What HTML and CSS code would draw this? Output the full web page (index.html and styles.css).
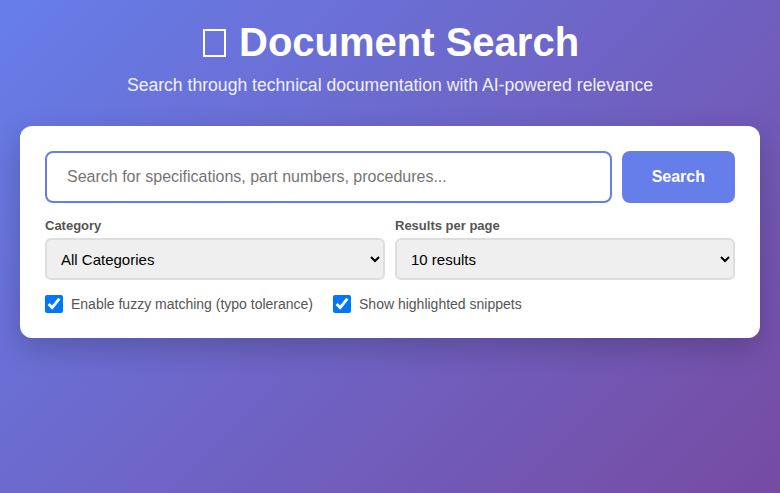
FILE: index.html
```html
<!DOCTYPE html>
<html lang="en">
<head>
<meta charset="utf-8">
<title>Document Search</title>
<link rel="stylesheet" href="styles.css">
</head>
<body>
<div class="page">
  <header class="header">
    <h1><svg class="title-icon" width="27" height="28" viewBox="0 0 27 28" aria-hidden="true"><rect x="3" y="1" width="21" height="26" fill="none" stroke="#fff" stroke-width="2"/></svg> Document Search</h1>
    <p>Search through technical documentation with AI-powered relevance</p>
  </header>
  <main class="card">
    <div class="search-row">
      <input class="search-input" type="text" placeholder="Search for specifications, part numbers, procedures...">
      <button class="search-btn">Search</button>
    </div>
    <div class="filters">
      <div class="field">
        <label class="field-label">Category</label>
        <select class="field-select">
          <option>All Categories</option>
        </select>
      </div>
      <div class="field">
        <label class="field-label">Results per page</label>
        <select class="field-select">
          <option>10 results</option>
        </select>
      </div>
    </div>
    <div class="options">
      <label class="option"><input type="checkbox" checked> Enable fuzzy matching (typo tolerance)</label>
      <label class="option"><input type="checkbox" checked> Show highlighted snippets</label>
    </div>
  </main>
</div>
</body>
</html>
```

FILE: styles.css
```css
* { box-sizing: border-box; }
html, body { margin: 0; padding: 0; }
body {
  font-family: "Liberation Sans", Arial, sans-serif;
  background: linear-gradient(135deg, #667eea 0%, #764ba2 100%);
  min-height: 100vh;
}
.page {
  max-width: 800px;
  margin: 0 auto;
  padding: 20px;
}
.header {
  text-align: center;
  color: #fff;
  margin-bottom: 30px;
}
.header h1 {
  font-size: 40px;
  margin: 0 0 10px;
  line-height: 44px;
}
.title-icon {
  vertical-align: -1px;
}
.header p {
  font-size: 17.6px;
  margin: 0;
  opacity: 0.9;
  line-height: 22px;
}
.card {
  background: #fff;
  border-radius: 12px;
  padding: 25px;
  box-shadow: 0 10px 30px rgba(0, 0, 0, 0.2);
}
.search-row {
  display: flex;
  gap: 10px;
  margin-bottom: 15px;
}
.search-input {
  flex: 1;
  font-family: inherit;
  font-size: 16px;
  padding: 15px 20px;
  height: 52px;
  border: 2px solid #667eea;
  border-radius: 8px;
  outline: none;
}
.search-input::placeholder { color: #757575; }
.search-btn {
  font-family: inherit;
  font-size: 16px;
  font-weight: bold;
  color: #fff;
  background: #667eea;
  border: none;
  border-radius: 8px;
  padding: 0 30px;
  height: 52px;
}
.filters {
  display: grid;
  grid-template-columns: 1fr 1fr;
  gap: 10px;
  margin-bottom: 15px;
}
.field-label {
  display: block;
  font-size: 13px;
  font-weight: bold;
  color: #555;
  line-height: 15px;
  margin-bottom: 5px;
}
.field-select {
  width: 100%;
  height: 42px;
  font-family: inherit;
  font-size: 15px;
  color: #000;
  padding: 0 10px;
  background-color: #efefef;
  border: 2px solid #ddd;
  border-radius: 6px;
}
.options {
  display: flex;
  gap: 20px;
}
.option {
  display: flex;
  align-items: center;
  gap: 8px;
  font-size: 14px;
  color: #555;
}
.option input {
  width: 18px;
  height: 18px;
  margin: 0;
}
```
